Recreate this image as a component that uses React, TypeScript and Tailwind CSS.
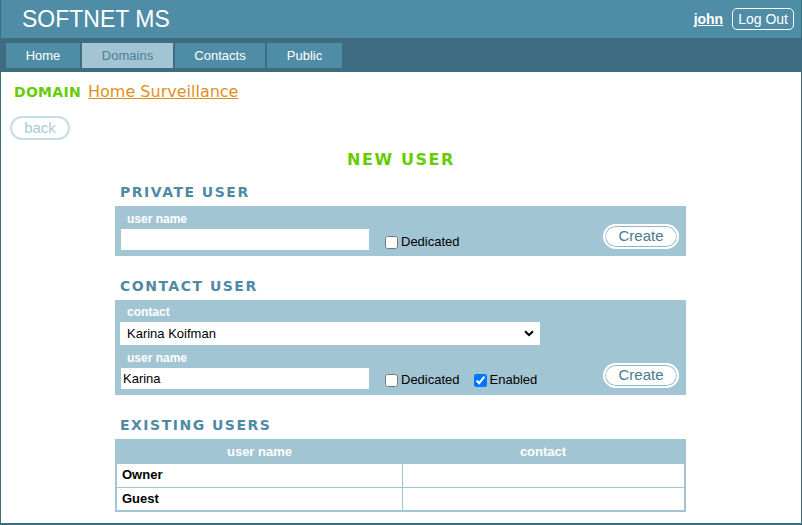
import React from "react";

const sans = "font-['Liberation_Sans',Arial,sans-serif]";
const verd = "font-['DejaVu_Sans',Verdana,sans-serif]";

function CreateBtn() {
  return (
    <button
      className={`${sans} w-[76px] h-[25px] rounded-full bg-white border-2 border-white shadow-[inset_0_0_0_1px_#8fb8ca] text-[15px] leading-[20px] text-[#4a7a90]`}
    >
      Create
    </button>
  );
}

function Check({ label, checked }: { label: string; checked?: boolean }) {
  return (
    <label className={`${sans} flex items-center text-[13px] leading-[16px] text-black`}>
      <input type="checkbox" defaultChecked={checked} className="m-0 mr-[3px] w-[13px] h-[13px]" />
      {label}
    </label>
  );
}

function PanelLabel({ text }: { text: string }) {
  return (
    <div className={`${sans} pl-[12px] flex items-end pb-[2px] text-[12px] leading-[16px] font-bold text-white`}>
      {text}
    </div>
  );
}

function SectionTitle({ text }: { text: string }) {
  return (
    <div className={`${verd} pl-[5px] h-[20px] leading-[20px] mb-[4px] text-[14px] font-bold tracking-[1.5px] text-[#4f8aa5]`}>
      {text}
    </div>
  );
}

export default function App() {
  return (
    <div className="w-[802px] h-[525px] bg-white border-x border-b-2 border-[#3e6d80] overflow-hidden">
      {/* top bar */}
      <div className="h-[38px] bg-[#4f8ca6] flex items-center pl-[21px] pr-[7px]">
        <div className={`${sans} text-white text-[23px] leading-[28px]`}>SOFTNET MS</div>
        <div className="ml-auto flex items-center gap-[9px]">
          <a className={`${sans} text-white font-bold text-[14px] underline`}>john</a>
          <button className={`${sans} h-[22px] px-[5px] rounded-[5px] border border-white text-white text-[14px] leading-[18px]`}>
            Log Out
          </button>
        </div>
      </div>
      {/* nav */}
      <div className="h-[34px] bg-[#3e6c80] flex pt-[5px] pl-[5px] gap-[2px]">
        {[
          ["Home", "w-[74px]", false],
          ["Domains", "w-[91px]", true],
          ["Contacts", "w-[90px]", false],
          ["Public", "w-[75px]", false],
        ].map(([t, w, active]) => (
          <div
            key={t as string}
            className={`${sans} ${w} h-[25px] flex items-center justify-center text-[13px] ${
              active ? "bg-[#a3c5d3] text-[#4d7f96]" : "bg-[#4f8ca6] text-white"
            }`}
          >
            {t}
          </div>
        ))}
      </div>

      {/* domain row */}
      <div className="pt-[10px] pl-[13px] flex items-baseline gap-[7px] h-[30px]">
        <span className={`${verd} text-[14px] font-bold tracking-[0.3px] text-[#66cc00] leading-[20px]`}>DOMAIN</span>
        <a className={`${verd} text-[16px] text-[#e0901c] underline leading-[20px]`}>Home Surveillance</a>
      </div>

      <div className="pl-[9px] mt-[14px] flex">
        <button className={`${sans} w-[60px] h-[24px] rounded-full border-2 border-[#c4dde8] text-[15px] leading-[18px] text-[#a9c9d8]`}>
          back
        </button>
      </div>

      <div className={`${verd} mt-[10px] h-[20px] leading-[20px] text-center text-[16px] font-bold tracking-[1.6px] text-[#66cc00]`}>
        NEW USER
      </div>

      <div className="w-[571px] ml-[114px] mt-[12px]">
        <SectionTitle text="PRIVATE USER" />
        <div className="bg-[#a2c5d3] h-[50px] flex">
          <div className="flex flex-col">
            <div className="h-[23px] flex">
              <PanelLabel text="user name" />
            </div>
            <input className="ml-[6px] w-[248px] h-[21px] bg-white outline-none px-[2px]" />
          </div>
          <div className="self-end mb-[6px] ml-[16px]">
            <Check label="Dedicated" />
          </div>
          <div className="ml-auto mr-[7px] mt-[17px]">
            <CreateBtn />
          </div>
        </div>

        <div className="mt-[20px]">
          <SectionTitle text="CONTACT USER" />
        </div>
        <div className="bg-[#a2c5d3] h-[95px] flex flex-col">
          <div className="h-[22px] flex">
            <PanelLabel text="contact" />
          </div>
          <div className={`${sans} ml-[5px] w-[420px] h-[23px] bg-white flex items-center pl-[7px] pr-[6px] text-[13px] text-black`}>
            <span>Karina Koifman</span>
            <svg className="ml-auto" width="10" height="7" viewBox="0 0 10 7">
              <path d="M1 1.2 L5 5 L9 1.2" stroke="black" strokeWidth="2" fill="none" />
            </svg>
          </div>
          <div className="flex">
            <div className="flex flex-col">
              <div className="h-[23px] flex">
                <PanelLabel text="user name" />
              </div>
              <input
                defaultValue="Karina"
                className={`${sans} ml-[6px] w-[248px] h-[21px] bg-white outline-none px-[2px] text-[13px] text-black`}
              />
            </div>
            <div className="self-end mb-[1px] ml-[16px] flex gap-[14px]">
              <Check label="Dedicated" />
              <Check label="Enabled" checked />
            </div>
            <div className="ml-auto mr-[7px] mt-[17px]">
              <CreateBtn />
            </div>
          </div>
        </div>

        <div className="mt-[20px]">
          <SectionTitle text="EXISTING USERS" />
        </div>
        <table className={`${sans} w-[571px] border-collapse border-2 border-[#a2c5d3] text-[13px]`}>
          <thead>
            <tr className="bg-[#a2c5d3] h-[23px]">
              <th className="w-[286px] text-white font-bold">user name</th>
              <th className="text-white font-bold">contact</th>
            </tr>
          </thead>
          <tbody>
            {["Owner", "Guest"].map((n) => (
              <tr key={n} className="h-[24px]">
                <td className="border border-[#a2c5d3] pl-[5px] font-bold text-black">{n}</td>
                <td className="border border-[#a2c5d3]"></td>
              </tr>
            ))}
          </tbody>
        </table>
      </div>
    </div>
  );
}
